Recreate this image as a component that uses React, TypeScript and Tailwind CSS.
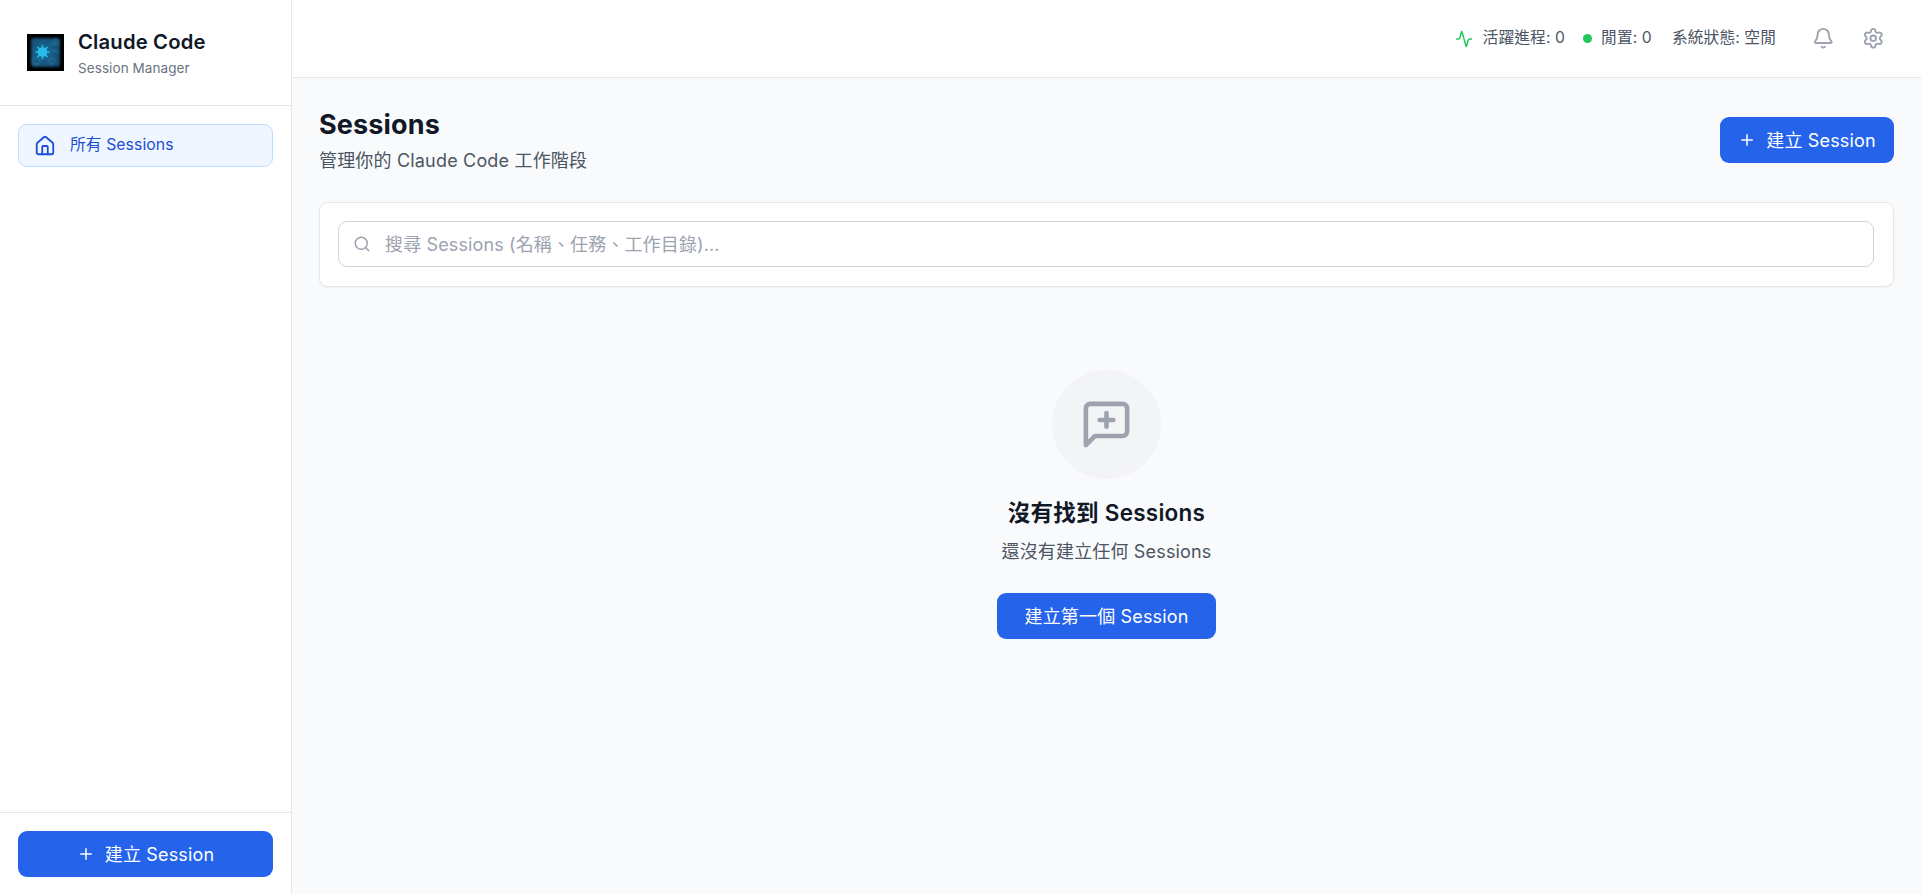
import { Activity, Bell, House, Plus, Search, Settings } from 'lucide-react'

const font = { fontFamily: 'Inter, "Noto Sans CJK TC", sans-serif' }

function Logo() {
  return (
    <svg width="37" height="37" viewBox="0 0 37 37" className="shrink-0">
      <defs>
        <radialGradient id="logoGlow" cx="42%" cy="48%" r="62%">
          <stop offset="0%" stopColor="#1a6d9c" />
          <stop offset="100%" stopColor="#124a6c" />
        </radialGradient>
        <filter id="logoBlur">
          <feGaussianBlur stdDeviation="1" />
        </filter>
        <filter id="starBlur">
          <feGaussianBlur stdDeviation="0.5" />
        </filter>
      </defs>
      <rect width="37" height="37" fill="#000" />
      <rect x="4" y="4" width="29" height="29" rx="3" fill="url(#logoGlow)" filter="url(#logoBlur)" />
      <g fill="none" stroke="#2f84ad" strokeWidth="1" filter="url(#logoBlur)">
        <circle cx="9" cy="27" r="3.5" />
        <circle cx="25" cy="27" r="3" />
        <circle cx="29" cy="8" r="2.5" />
        <path d="M22 10h7M24 17h7" />
      </g>
      <g stroke="#25bdea" strokeWidth="1.5" strokeLinecap="round" filter="url(#starBlur)">
        <path d="M15.5 11.5v13M9 18h13M10.9 13.4l9.2 9.2M20.1 13.4l-9.2 9.2" />
      </g>
      <circle cx="15.5" cy="18" r="4.8" fill="#25bdea" filter="url(#starBlur)" />
    </svg>
  )
}

function EmptyIcon() {
  return (
    <svg width="55" height="55" viewBox="0 0 24 24" fill="none" stroke="#9ca3af" strokeWidth="2" strokeLinecap="round" strokeLinejoin="round">
      <path d="M21 15a2 2 0 0 1-2 2H7l-4 4V5a2 2 0 0 1 2-2h14a2 2 0 0 1 2 2z" />
      <path d="M12 7v6" />
      <path d="M9 10h6" />
    </svg>
  )
}

function CreateButton({ className }: { className: string }) {
  return (
    <button className={`flex h-[46px] items-center justify-center rounded-[9px] bg-[#2563eb] text-[18px] tracking-[0.15px] text-white ${className}`}>
      <Plus className="mr-[10px] h-[18px] w-[18px]" strokeWidth={2} />
      建立 Session
    </button>
  )
}

export default function App() {
  return (
    <div className="flex h-[894px] w-full overflow-hidden bg-[#f9fafb]" style={font}>
      {/* Sidebar */}
      <aside className="flex w-[292px] shrink-0 flex-col border-r border-[#e5e7eb] bg-white">
        <div className="flex h-[106px] items-center gap-[14px] border-b border-[#e5e7eb] pl-[27px]">
          <Logo />
          <div>
            <div className="mt-[1px] text-[20.25px] leading-[28px] font-semibold tracking-[0.16px] text-[#111827]">Claude Code</div>
            <div className="mt-[2px] text-[13.5px] leading-[20px] tracking-[0.08px] text-[#6b7280]">Session Manager</div>
          </div>
        </div>
        <nav className="flex-1 px-[18px] pt-[18px]">
          <div className="flex h-[43px] items-center gap-[14px] rounded-[9px] border border-[#bfdbfe] bg-[#eff6ff] pl-[15px] text-[15.75px] tracking-[0.08px] text-[#1d4ed8]">
            <House className="h-[22px] w-[22px]" strokeWidth={2} />
            <span className="mb-[2px]">所有 Sessions</span>
          </div>
        </nav>
        <div className="border-t border-[#e5e7eb] px-[18px] pt-[18px] pb-[17px]">
          <CreateButton className="w-full" />
        </div>
      </aside>

      <div className="flex min-w-0 flex-1 flex-col">
        {/* Header */}
        <header className="flex h-[78px] items-center justify-end border-b border-[#e5e7eb] bg-white pr-[37px] text-[15.75px] tracking-[0.08px] text-[#4b5563]">
          <Activity className="h-[18px] w-[18px] text-[#22c55e]" strokeWidth={2} />
          <span className="mb-[1px] ml-[10px]">活躍進程: 0</span>
          <span className="ml-[18px] h-[9px] w-[9px] rounded-full bg-[#22c55e]" />
          <span className="mb-[1px] ml-[9px]">閒置: 0</span>
          <span className="mb-[1px] ml-[20px]">系統狀態: 空閒</span>
          <Bell className="ml-[36px] h-[22.5px] w-[22.5px] text-[#9ca3af]" strokeWidth={2} />
          <Settings className="ml-[27px] h-[22.5px] w-[22.5px] text-[#9ca3af]" strokeWidth={2} />
        </header>

        <main className="flex-1 px-[27px] pt-[27px]">
          <div className="flex items-center justify-between">
            <div>
              <h1 className="mt-[2px] text-[27px] leading-[36px] font-bold tracking-[0.15px] text-[#111827]">Sessions</h1>
              <p className="mt-[4px] text-[18px] leading-[28px] tracking-[0.18px] text-[#4b5563]">管理你的 Claude Code 工作階段</p>
            </div>
            <CreateButton className="w-[174px]" />
          </div>

          <div className="mt-[27px] rounded-[9px] border border-[#e5e7eb] bg-white pt-[18px] pr-[19px] pb-[19px] pl-[18px] shadow-xs">
            <div className="flex h-[46px] items-center rounded-[9px] border border-[#d1d5db] bg-white pl-[14px]">
              <Search className="h-[18px] w-[18px] text-[#9ca3af]" strokeWidth={2} />
              <input
                className="ml-[14px] flex-1 bg-transparent text-[18px] tracking-[0.13px] outline-none placeholder:text-[#9ca3af]"
                placeholder="搜尋 Sessions (名稱、任務、工作目錄)..."
              />
            </div>
          </div>

          <div className="mt-[83px] flex flex-col items-center">
            <div className="flex h-[109px] w-[109px] items-center justify-center rounded-full bg-[#f3f4f6]">
              <EmptyIcon />
            </div>
            <h2 className="mt-[18px] text-[22.5px] leading-[32px] font-semibold tracking-[0.25px] text-[#111827]">沒有找到 Sessions</h2>
            <p className="mt-[9px] text-[18px] leading-[28px] tracking-[0.16px] text-[#4b5563]">還沒有建立任何 Sessions</p>
            <button className="mt-[27px] h-[46px] w-[219px] rounded-[9px] bg-[#2563eb] text-[18px] tracking-[0.16px] text-white">
              建立第一個 Session
            </button>
          </div>
        </main>
      </div>
    </div>
  )
}
